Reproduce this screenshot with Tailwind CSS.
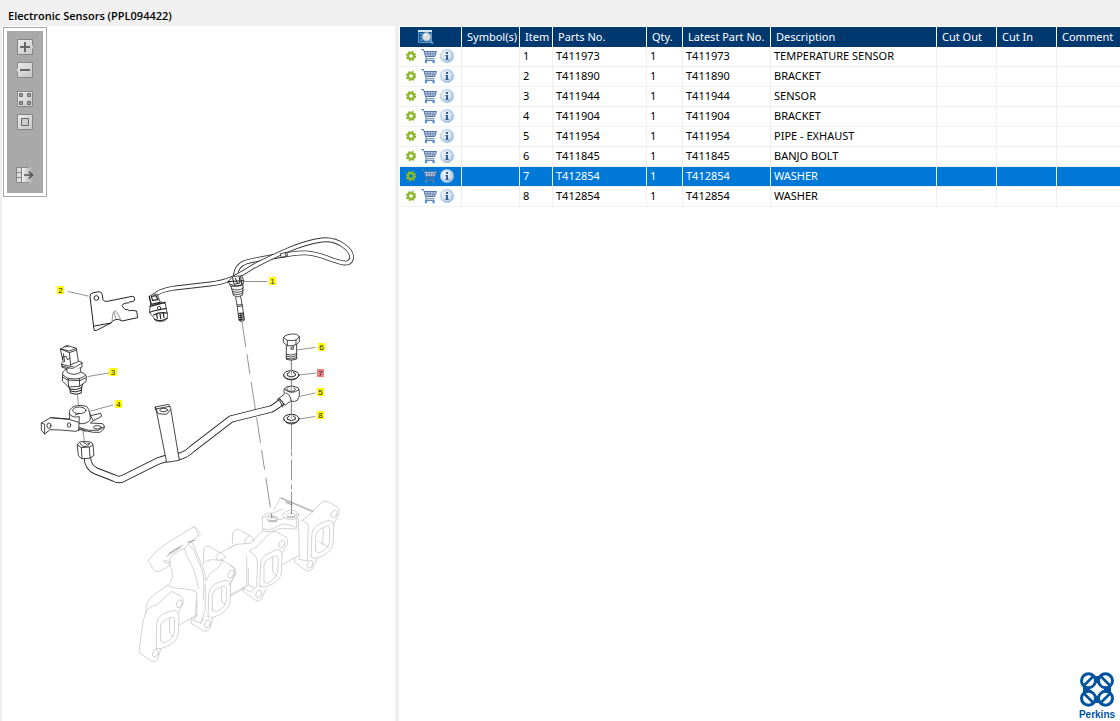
<!DOCTYPE html>
<html lang="en">
<head>
  <meta charset="utf-8"/>
  <meta name="viewport" content="width=device-width, initial-scale=1"/>
  <title>Electronic Sensors (PPL094422)</title>
  <script src="https://cdn.jsdelivr.net/npm/@tailwindcss/browser@4"></script>
</head>
<body class="h-screen flex flex-col bg-[#f0f0f0] font-['Noto_Sans','Open_Sans',sans-serif] text-[11px] text-black overflow-hidden">

  <!-- icon sprites -->
  <svg class="absolute size-0" aria-hidden="true">
    <defs>
      <linearGradient id="btnFill" x1="0" y1="0" x2="1" y2="1">
        <stop offset="0" stop-color="#ededed"/><stop offset="1" stop-color="#c4c4c4"/>
      </linearGradient>
      <radialGradient id="infoFill" cx=".4" cy=".4" r=".65">
        <stop offset="0" stop-color="#f2f8fc"/><stop offset=".6" stop-color="#cfe0ee"/><stop offset="1" stop-color="#8fb6d6"/>
      </radialGradient>
      <linearGradient id="exportFill" x1="0" x2="1">
        <stop offset="0" stop-color="#f0f0f0"/><stop offset="1" stop-color="#a9a9a9"/>
      </linearGradient>
    </defs>
    <symbol id="gear" viewBox="0 0 12 12">
      <circle cx="6" cy="6" r="4.2" fill="none" stroke="#8cb82b" stroke-width="2" stroke-dasharray="1.9 1.399"/>
      <circle cx="6" cy="6" r="2.9" fill="none" stroke="#8cb82b" stroke-width="2.2"/>
    </symbol>
    <symbol id="cart" viewBox="0 0 16 16">
      <path d="M3 3.500h12.500l-1.800 5.600H5z" fill="#b9cce2"/>
      <path d="M.3 1.500h2.200l2.800 9.300h8.400M3 3.500h12.500l-1.800 5H4.800M5.300 10.800l-1 1.800h9.200" fill="none" stroke="#5579a8"/>
      <path d="M3.700 5.900h11M6.500 3.500l.6 5M9.300 3.500v5M12.400 3.500l-.6 5" fill="none" stroke="#5579a8" stroke-width=".7"/>
      <circle cx="5" cy="14" r="1.2" fill="#3f8fd2"/><circle cx="12.600" cy="14" r="1.200" fill="#3f8fd2"/>
    </symbol>
    <symbol id="info" viewBox="0 0 14 14">
      <circle cx="7" cy="7" r="6.700" fill="url(#infoFill)" stroke="#a5c3dc" stroke-width=".6"/>
      <path d="M6 3h2v2H6zM5.400 6H8v4h.7v1H5.400v-1H6V7h-.6z" fill="#34639c"/>
    </symbol>
  </svg>

  <header class="h-[26px] shrink-0 flex items-end px-2 pb-[2px]">
    <h1 class="font-['Open_Sans','Noto_Sans',sans-serif] font-semibold leading-4">Electronic Sensors (PPL094422)</h1>
  </header>

  <main class="flex flex-1 min-h-0 pl-[2px]">

    <!-- drawing -->
    <section class="relative w-[393px] shrink-0 bg-white overflow-hidden">
      <nav aria-label="Drawing tools" class="absolute left-px top-px z-10 border border-[#a9a9a9] bg-white p-[3px]">
        <div class="flex flex-col items-center w-9 h-[162px] bg-[#a9a9a9] pt-[7px]">
          <button type="button" aria-label="Zoom in" class="size-[18px]">
            <svg viewBox="0 0 18 18" class="size-[18px] overflow-visible"><path d="M1.500 1.500h15v5.500l2 2-2 2v5.500h-15z" fill="url(#btnFill)" stroke="#858585"/><path d="M4 9h10M9 4v10" stroke="#666" stroke-width="2"/></svg>
          </button>
          <button type="button" aria-label="Zoom out" class="size-[18px] mt-[5px]">
            <svg viewBox="0 0 18 18" class="size-[18px] overflow-visible"><path d="M1.500 1.500h15v15h-15v-5.500l-2-2 2-2z" fill="url(#btnFill)" stroke="#858585"/><path d="M4 9h10" stroke="#666" stroke-width="2"/></svg>
          </button>
          <button type="button" aria-label="Fit to window" class="size-[18px] mt-[11px]">
            <svg viewBox="0 0 18 18" class="size-[18px]"><path d="M1.500 1.500h15v15h-15z" fill="url(#btnFill)" stroke="#858585"/><path d="M3.500 3.500h3v3h-3zM11.500 3.500h3v3h-3zM3.500 11.500h3v3h-3zM11.500 11.500h3v3h-3z" fill="#999" stroke="#6e6e6e"/></svg>
          </button>
          <button type="button" aria-label="Actual size" class="size-[18px] mt-[5px]">
            <svg viewBox="0 0 18 18" class="size-[18px]"><path d="M1.500 1.500h15v15h-15z" fill="url(#btnFill)" stroke="#858585"/><path d="M5.500 5.500h7v7h-7z" fill="#ccc" stroke="#666"/></svg>
          </button>
          <button type="button" aria-label="Hide list" class="size-[18px] mt-[35px]">
            <svg viewBox="0 0 18 18" class="size-[18px]"><path d="M1 1h4v16H1z" fill="#ddd"/><path d="M.5 1.500h5v15h-5zM.5 6.500h5M.5 11.500h5" fill="none" stroke="#858585"/><path d="M6 1h11v16H6z" fill="url(#exportFill)"/><path d="M6 1.500h7M6 16.500h7" stroke="#8b8b8b"/><path d="M8 9h8M13 5.500L16.500 9 13 12.500" fill="none" stroke="#555" stroke-width="1.700"/></svg>
          </button>
        </div>
      </nav>

      <svg viewBox="2 26 393 695" class="block w-full" fill="none" stroke-linejoin="round" stroke-linecap="round">
        <!-- manifold, left half -->
        <g transform="translate(130 490) scale(.3333)" stroke="#c2c2c2" stroke-width="2.200">
          <path d="M55 210Q80 178 115 157L193 109L212 132L196 143Q190 155 178 160L164 175Q135 185 119 205L122 222Q112 235 88 244Q75 247 70 238Z"/>
          <path d="M110 199Q130 175 160 165Q140 185 110 199ZM194 110L206 138M172 156L196 150M100 214Q108 207 120 218Q110 224 100 214"/>
          <path d="M118 190L150 172M176 158L192 151" stroke="#888"/>
          <path d="M118 222Q130 240 127 262Q124 280 112 286L70 316Q48 330 47 370L40 390L28 478L30 490L64 513Q78 519 84 505L92 478"/>
          <path d="M112 286Q130 296 165 297Q195 300 200 308L201 380M164 175Q163 190 177 210Q198 245 205 296M178 165Q195 180 201 207Q220 235 222 280L220 330M188 160Q200 190 208 207Q226 240 228 272"/>
          <path d="M48 370Q50 350 80 345L125 304L155 320Q162 325 159 340L146 367M148 405L200 375"/>
          <path d="M79 475L80 400Q83 380 100 372L126 362Q146 360 147 380L145 430Q140 455 118 466Q90 480 79 475Z"/>
          <path d="M92 450V405Q95 395 105 392L120 383Q132 378 134 390L133 425Q130 445 110 455Q95 463 92 450ZM119 386V430L130 440"/>
          <ellipse cx="148" cy="341" rx="8" ry="12" transform="rotate(25 148 341)"/><ellipse cx="76" cy="490" rx="8" ry="12" transform="rotate(20 76 490)"/>
          <path d="M228 272Q240 245 262 235L280 212L312 232Q320 238 317 252L298 285M222 220Q235 205 260 210L280 212"/>
          <path d="M234 380L236 312Q240 290 258 280L285 271Q302 270 302 290L300 335Q295 360 272 372Q244 388 234 380Z"/>
          <path d="M247 358V315Q250 300 262 296L275 290Q289 286 290 298L289 335Q284 352 266 362Q249 369 247 358ZM275 294V335L287 345"/>
          <ellipse cx="303" cy="252" rx="8" ry="12" transform="rotate(25 303 252)"/><ellipse cx="232" cy="402" rx="8" ry="12" transform="rotate(20 232 402)"/>
          <path d="M184 388L183 400L222 423Q236 426 242 410L248 385M184 388L196 384L199 330M190 390L212 400L226 360V285M212 400L222 384"/>
          <path d="M220 220L222 175Q226 168 236 169L270 188Q284 192 285 203M270 188Q250 195 262 210M285 203Q280 208 270 210M272 188L322 162M302 318L340 297L355 285"/>
        </g>
        <!-- manifold, right half -->
        <g transform="translate(230 485) scale(.3333)" stroke="#c2c2c2" stroke-width="2.200">
          <path d="M0 188L20 178L60 175M7 176L8 143Q14 133 25 133L60 152Q72 158 70 170M60 152Q42 158 45 176M60 175L97 138V95Q105 85 130 84L160 72"/>
          <path d="M58 198Q72 190 82 184L122 142L135 139L168 156Q176 163 172 178L156 206M58 198L78 215Q84 225 82 250L80 305L62 322L38 308L40 320L80 348Q94 350 98 335L108 310"/>
          <path d="M89 303L92 232Q95 215 112 207L140 194Q156 192 156 210L154 265Q150 285 128 297Q98 312 89 303Z"/>
          <path d="M102 290V240Q104 226 116 222L130 214Q145 210 145 222L143 262Q139 278 122 290Q106 300 102 290ZM128 216V262L141 273"/>
          <ellipse cx="156" cy="177" rx="8" ry="12" transform="rotate(25 156 177)"/><ellipse cx="86" cy="327" rx="8" ry="12" transform="rotate(20 86 327)"/>
          <path d="M50 215V300Q42 305 40 310M55 250V300L75 310M0 240Q16 250 15 265L0 300M0 330L40 308"/>
          <path d="M97 100Q115 88 135 95L150 105L165 98M97 130Q120 140 145 122L160 117Q180 118 200 128V85M98 138Q120 145 150 130L200 132"/>
          <ellipse cx="128" cy="102" rx="17" ry="9"/><ellipse cx="129" cy="102" rx="10" ry="5"/>
          <ellipse cx="183" cy="90" rx="24" ry="14"/><ellipse cx="183" cy="91" rx="13" ry="7"/>
          <path d="M132 75L152 37L250 78L235 92M165 50L180 54L190 62M205 100L208 218M216 105L235 118L232 228L204 222"/>
          <path d="M154 40L248 80M168 52L185 60M116 108H140M172 96H194" stroke="#888"/>
          <path d="M250 78L275 52Q282 48 292 49L323 66Q330 75 326 88L310 118M235 92L212 110"/>
          <path d="M243 215L246 145Q250 125 268 117L292 107Q311 105 311 122L309 175Q304 200 280 212Q250 226 243 215Z"/>
          <path d="M257 196V152Q260 138 272 132L286 124Q300 121 299 134L298 172Q294 190 276 200Q260 208 257 196ZM266 170L296 187M280 130L278 178"/>
          <ellipse cx="312" cy="87" rx="8" ry="12" transform="rotate(25 312 87)"/><ellipse cx="240" cy="238" rx="8" ry="12" transform="rotate(20 240 238)"/>
          <path d="M194 220V232L230 257Q244 262 250 245L262 220M155 240L205 212"/>
        </g>

        <!-- centre lines -->
        <g stroke="#777" stroke-width=".8">
          <path d="M242 322L272 518" stroke-dasharray="25 8 19 9 29 7"/>
          <path d="M291.500 360V450M291.500 452V456M291.500 460V480M291.500 485V489M291.500 492V514"/>
          <path d="M77.500 395L79 411M83 431L84.500 442"/>
        </g>

        <!-- sensor harness -->
        <g stroke-linecap="butt">
          <path d="M235.500 278Q235 266 246 262Q262 258 285 255C300 252 310 251 330 259C342 263 350 266 351.500 258" stroke="#333" stroke-width="4.800"/>
          <path d="M235.500 278Q235 266 246 262Q262 258 285 255C300 252 310 251 330 259C342 263 350 266 351.500 258" stroke="#fff" stroke-width="3.200"/>
          <path d="M154 297Q156 291 175 288L210 284C236 281 242 272 258 264C278 254 300 243 322 240C338 238 353 250 351.500 259" stroke="#333" stroke-width="4.800"/>
          <path d="M154 297Q156 291 175 288L210 284C236 281 242 272 258 264C278 254 300 243 322 240C338 238 353 250 351.500 259" stroke="#fff" stroke-width="3.200"/>
        </g>
        <g transform="translate(190 225) scale(.3333)" stroke="#222" stroke-width="2.400">
          <path d="M272 86L290 82L293 92L275 97ZM286 82L288 94" fill="#fff"/>
          <path d="M116 168L128 155L155 152L161 166L158 182L123 184Z" fill="#fff"/>
          <path d="M113 170L161 167M122 178Q140 190 159 176M128 158L132 178L150 174L148 156M136 160L143 176M152 155L155 176" stroke-width="3"/>
          <path d="M123 184L131 212Q145 220 158 210L159 182M125 192Q145 200 160 189M127 199Q145 207 160 196M129 206Q145 213 159 203"/>
          <path d="M137 217L141 240L156 239L152 214M141 240L147 286Q154 292 163 286L157 239M143 245L156 243"/>
          <path d="M146 266L161 264M147 272L161 270M148 278L162 276M148 284L162 282M153 266V288" stroke-width="3.500"/>
        </g>
        <!-- connector and clip -->
        <g transform="translate(30 225) scale(.3333)" stroke="#222" stroke-width="2.400">
          <path d="M358 214Q368 203 382 208L390 230L406 236L413 272Q412 285 398 289L378 288L368 274L358 262L362 236Z" fill="#fff"/>
          <path d="M358 214L364 238L390 232M364 214L378 212L384 224L368 226ZM360 244L406 232M360 262L370 258L408 250M371 270Q390 260 412 264M374 283Q392 292 412 280M380 268L382 280M390 266L392 280M400 266L402 278" stroke-width="3.500"/>
          <circle cx="387" cy="249" r="5"/>
          <path d="M191 305L180 215Q179 205 190 203L208 200Q216 201 217 210L219 224Q222 231 232 229L307 214Q314 214 314 221L313 227Q306 232 300 230Q296 236 288 234Q278 236 276 242L282 250Q284 256 292 253Q298 260 304 256L320 258L323 278L276 288Q264 280 256 284Q246 288 243 294L194 303M191 305L193 317L200 316L243 294" stroke-width="3"/>
          <circle cx="199" cy="219" r="7" stroke-width="3"/>
          <path d="M246 288L249 264Q256 252 262 264L273 285M253 262L257 280" stroke="#777"/>
        </g>

        <!-- pipe -->
        <g stroke-linejoin="round" stroke-linecap="butt">
          <path d="M87.500 456Q87 467 96 471L114 478Q119 481 124 478L158 461Q172 456 181 456Q187 454 192 449L231 419L271 409Q276 407 287 397" stroke="#222" stroke-width="7.400"/>
          <path d="M87.500 456Q87 467 96 471L114 478Q119 481 124 478L158 461Q172 456 181 456Q187 454 192 449L231 419L271 409Q276 407 287 397" stroke="#fff" stroke-width="5.600"/>
        </g>
        <g transform="translate(30 335) scale(.3333)" stroke="#222" stroke-width="2.500">
          <!-- sensor 3 -->
          <path d="M92 42L110 31L139 40L145 78L156 82V96L134 107L96 97L95 86L99 82Z" fill="#fff"/>
          <path d="M92 42L118 48L139 40M92 42L118 53L140 45M118 53L122 90M95 88L134 97L156 84M95 93L132 102M98 66V74M98 66L108 64M110 66L112 74L120 70M100 56L104 80M105 36L114 34M120 90L145 80"/>
          <path d="M110 103Q96 106 98 120L97 138L116 156L148 154L168 140L169 124Q164 112 152 112V100" fill="#fff"/>
          <path d="M110 103L112 112Q130 124 150 113M98 120Q112 134 132 132Q158 132 167 120M114 130L116 156M148 131L149 153M98 126L112 135L150 137L168 128"/>
          <path d="M116 156L120 162L121 174Q138 182 154 174V158L158 148M118 162Q138 168 156 158M121 168Q138 175 154 166" stroke-width="3"/>
          <!-- bracket 4 -->
          <path d="M118 236Q116 222 132 214Q150 208 170 214Q178 222 179 236L182 242L212 235L215 244L190 257L181 264L218 266Q226 272 222 282L210 292L190 292L150 284L138 289L90 285L60 284L44 297L34 286V264L62 248L118 252Z" fill="#fff"/>
          <path d="M118 236Q126 250 148 245L146 284M34 264L44 268V297M62 248Q90 250 120 254L146 262M148 266Q170 268 181 255L180 236M182 242L190 257M148 278Q175 290 205 286L222 276M146 284Q156 275 166 290M135 240L148 235"/>
          <ellipse cx="148" cy="226" rx="20" ry="10"/><ellipse cx="57" cy="272" rx="6" ry="8"/><ellipse cx="117" cy="270" rx="5" ry="7"/><ellipse cx="202" cy="277" rx="12" ry="5"/>
          <!-- nut -->
          <path d="M142 330Q146 318 160 320H176Q188 320 189 330L192 361L178 370L154 371L146 362Z" fill="#fff"/>
          <path d="M142 330L154 338L178 336L189 330M154 338L156 371M178 336L180 368M150 324L158 334L172 334L180 324L170 328L160 322"/>
          <!-- strap -->
          <path d="M376 216L416 208L422 220L448 376L410 382L380 232Z" fill="#fff"/>
          <path d="M376 216L384 236L410 238L421 224M376 222L420 214"/><ellipse cx="401" cy="225" rx="12" ry="5"/>
        </g>
        <g transform="translate(180 325) scale(.3333)" stroke="#222" stroke-width="2.500">
          <!-- bolt 6 -->
          <path d="M319 62V103Q334 109 350 102V60" fill="#fff"/>
          <path d="M319 88Q334 94 350 86M319 94Q334 100 350 92M319 100Q334 106 350 98M333 68L340 64V73L334 73Z"/>
          <path d="M310 38Q312 32 324 29Q340 25 350 28L358 35V51L349 59Q336 64 322 62L311 53Z" fill="#fff"/>
          <path d="M311 38L322 46Q336 48 348 45L358 35M322 47V62M348 46V59"/>
          <!-- washers -->
          <ellipse cx="334" cy="150" rx="23" ry="13" fill="#fff" stroke-width="3"/><path d="M328 142Q318 146 322 152Q334 160 346 152Q350 146 340 142" stroke-width="3"/><path d="M311 152Q316 164 334 165Q352 164 357 152"/>
          <ellipse cx="334" cy="281" rx="23" ry="13" fill="#fff" stroke-width="3"/><path d="M328 273Q318 277 322 283Q334 291 346 283Q350 277 340 273" stroke-width="3"/><path d="M311 283Q316 296 334 297Q352 296 357 283"/>
          <path d="M334 108V150M334 165V192M334 232V280" stroke="#888"/>
          <!-- banjo end -->
          <path d="M313 206Q308 190 322 185Q340 180 354 188Q360 196 358 214L352 226Q344 232 332 228L316 240L296 222Z" fill="#fff"/>
          <path d="M313 192Q334 212 357 194M318 204Q330 206 334 228M296 220Q306 222 312 242M292 223Q302 226 308 246M324 188Q316 194 326 198Q334 201 344 197Q350 192 342 188"/>
          <path d="M334 180V196" stroke="#888"/>
        </g>

        <!-- leaders -->
        <g stroke="#777" stroke-width=".8">
          <path d="M68 291.500L88 296M244 281.500H267M88 376.500L109 373M89 411.500L113 405M297 350L315 347.500M299 375L316 373M299 396.500L315 393M299 419L315 416.500"/>
        </g>
        <!-- callouts -->
        <g fill="#ff0">
          <path d="M57 286h7v8h-7zM269 277h7v8h-7zM109 368h8v8h-8zM115 400h7v8h-7zM318 343h7v8h-7zM317 388h7v8h-7zM317 411h7v8h-7z"/>
          <path d="M317 369h7v8h-7z" fill="#f08080"/>
        </g>
        <g fill="#222" font-family="Liberation Sans, sans-serif" font-size="8" text-anchor="middle">
          <text x="60.500" y="293">2</text>
          <text x="272.500" y="284">1</text>
          <text x="113" y="375">3</text>
          <text x="118.500" y="407">4</text>
          <text x="321.500" y="350">6</text>
          <text x="320.500" y="376">7</text>
          <text x="320.500" y="395">5</text>
          <text x="320.500" y="418">8</text>
        </g>
      </svg>
    </section>

    <!-- parts list -->
    <section class="flex flex-col flex-1 min-w-0 ml-1 pl-px pt-px bg-white">
      <table class="w-full table-fixed border-separate border-spacing-0 leading-4">
        <colgroup>
          <col class="w-[62px]"/>
          <col class="w-[58px]"/>
          <col class="w-[33px]"/>
          <col class="w-[94px]"/>
          <col class="w-[36px]"/>
          <col class="w-[88px]"/>
          <col class="w-[166px]"/>
          <col class="w-[60px]"/>
          <col class="w-[60px]"/>
          <col/>
        </colgroup>
        <thead>
          <tr class="h-5 bg-[#003870] text-white text-left whitespace-nowrap *:font-normal *:p-0 *:pl-[5px] *:border-r *:border-white *:last:border-r-0">
            <th>
              <svg viewBox="0 0 16 16" class="size-4 ml-[13px]" role="img" aria-label="Preview">
                <path d="M.5 1.500h13v12h-13z" fill="#0b5c9c" stroke="#5b9bd0"/><path d="M0 1h14v2H0z" fill="#d5e6f3"/><path d="M2 5h3M2 8h2M2 11h3" stroke="#7fb2dc"/>
                <path d="M11.300 11L15 14.800" stroke="#5a9ad0" stroke-width="2.200"/>
                <circle cx="8.500" cy="7.800" r="4.300" fill="#d8dee4" stroke="#9aa9b6"/><path d="M6 7.300Q6.500 5.300 8.500 5.100" stroke="#fff" fill="none"/>
              </svg>
            </th>
            <th>Symbol(s)</th>
            <th>Item</th>
            <th>Parts No.</th>
            <th>Qty.</th>
            <th>Latest Part No.</th>
            <th>Description</th>
            <th>Cut Out</th>
            <th>Cut In</th>
            <th>Comment</th>
          </tr>
        </thead>
        <tbody id="parts"></tbody>
      </table>

      <svg viewBox="0 0 40 50" class="mt-auto ml-auto w-10 h-[50px] mr-[2px]" role="img" aria-label="Perkins">
        <g fill="none" stroke="#00549f" stroke-width="3">
          <circle cx="10.500" cy="9.800" r="7"/><circle cx="27.500" cy="9.800" r="7"/>
          <circle cx="10.500" cy="27.200" r="7"/><circle cx="27.500" cy="27.200" r="7"/>
          <path d="M6 14.500L15 5.500M32 14.500L23 5.500M6 22.500L15 31.500M32 22.500L23 31.500" stroke-width="2.600"/>
        </g>
        <path d="M19 13L24.500 18.500 19 24 13.500 18.500z" fill="#fff"/>
        <path d="M5 16h7v5H5zM26 16h7v5h-7zM16.500 5h5v7h-5zM16.500 25h5v7h-5z" fill="#00549f"/>
        <text x="19" y="47" text-anchor="middle" fill="#00549f" font-family="Liberation Sans, sans-serif" font-weight="bold" font-size="10">Perkins</text>
      </svg>
    </section>
  </main>

  <script>
    const parts = [
      ["T411973", "TEMPERATURE SENSOR"],
      ["T411890", "BRACKET"],
      ["T411944", "SENSOR"],
      ["T411904", "BRACKET"],
      ["T411954", "PIPE - EXHAUST"],
      ["T411845", "BANJO BOLT"],
      ["T412854", "WASHER"],
      ["T412854", "WASHER"]
    ];
    const selected = 7;

    document.getElementById("parts").innerHTML = parts.map(([no, desc], i) => {
      const item = i + 1;
      const state = item === selected ? "bg-[#0078d7] text-white" : "bg-white";
      return `<tr class="h-5 ${state} whitespace-nowrap *:p-0 *:pl-[3px] *:pb-[2px] *:border-r *:border-b *:border-[#f0f0f0] *:last:border-r-0">
        <td>
          <div class="flex items-center pl-[2px]">
            <button type="button" aria-label="Options for item ${item}" class="size-3"><svg class="size-3"><use href="#gear"/></svg></button>
            <button type="button" aria-label="Add item ${item} to cart" class="size-4 ml-1"><svg class="size-4"><use href="#cart"/></svg></button>
            <button type="button" aria-label="Info for item ${item}" class="size-[14px] ml-[3px]"><svg class="size-[14px]"><use href="#info"/></svg></button>
          </div>
        </td>
        <td></td>
        <td>${item}</td>
        <td>${no}</td>
        <td>1</td>
        <td>${no}</td>
        <td>${desc}</td>
        <td></td>
        <td></td>
        <td></td>
      </tr>`;
    }).join("");
  </script>
</body>
</html>
